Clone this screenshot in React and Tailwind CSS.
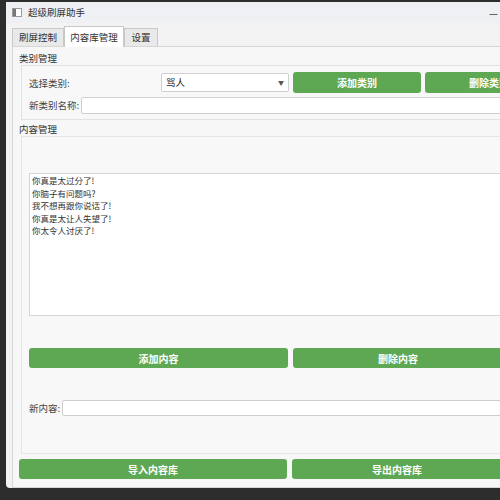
import React from "react"

const font = { fontFamily: '"Noto Sans CJK SC", "Noto Sans", sans-serif' }

function GreenButton({ children, className = "" }) {
  return (
    <button className={`h-[20px] shrink-0 rounded-[3px] bg-[#5fa853] text-white text-[10px] font-semibold flex items-center justify-center whitespace-nowrap ${className}`}>
      {children}
    </button>
  )
}

const lines = ["你真是太过分了!", "你脑子有问题吗?", "我不想再跟你说话了!", "你真是太让人失望了!", "你太令人讨厌了!"]

export default function App() {
  return (
    <div className="w-[500px] h-[500px] bg-[#2d2d2d] pt-[2px] pl-[6px] overflow-hidden" style={font}>
      <div className="w-[510px] h-[486px] bg-[#f3f3f3] flex flex-col rounded-tl-[3px] rounded-bl-[4px]">
        {/* Title bar */}
        <div className="h-[21px] bg-[#eef0f3] flex items-center pl-[6px] shrink-0">
          <div className="w-[10px] h-[9px] border border-[#9a9a9a] bg-white flex">
            <div className="w-[3px] bg-[#777]"></div>
          </div>
          <span className="ml-[6px] text-[9.5px] text-[#333] whitespace-nowrap">超级刷屏助手</span>
          <span className="ml-auto mr-[18px] text-[10px] text-[#444]">—</span>
        </div>

        {/* Tabs */}
        <div className="flex items-end pl-[6px] h-[23px] shrink-0 whitespace-nowrap">
          <div className="h-[18px] w-[52px] border border-[#c8c8c8] border-b-0 bg-[#e9e9e9] text-[9.5px] text-[#333] flex items-center justify-center">刷屏控制</div>
          <div className="h-[21px] w-[60px] border border-[#c8c8c8] border-b-0 bg-white text-[9.5px] text-[#333] flex items-center justify-center -mb-[1px] relative z-10">内容库管理</div>
          <div className="h-[18px] w-[34px] border border-[#c8c8c8] border-b-0 bg-[#e9e9e9] text-[9.5px] text-[#333] flex items-center justify-center">设置</div>
        </div>

        {/* Pane */}
        <div className="flex-1 ml-[6px] border border-[#d6d6d6] bg-[#f7f7f7] flex flex-col pl-[6px] pb-[6px] whitespace-nowrap">
          <div className="text-[9.5px] text-[#333] mt-[5px] leading-[12px]">类别管理</div>
          <div className="ml-[2px] mt-[1px] h-[55px] border border-[#e2e2e2] bg-[#f8f8f8] flex flex-col pl-[7px] pt-[6px] gap-[3px]">
            <div className="flex items-center h-[21px]">
              <span className="w-[132px] shrink-0 text-[9.5px] leading-[12px] text-[#444]">选择类别:</span>
              <div className="w-[128px] shrink-0 h-[19px] border border-[#cfcfcf] bg-white rounded-[2px] flex items-center px-[4px] text-[9.5px] text-[#222]">
                骂人
                <span className="ml-auto text-[6px] text-[#555]">▼</span>
              </div>
              <GreenButton className="ml-[4px] w-[128px] h-[21px]">添加类别</GreenButton>
              <GreenButton className="ml-[4px] w-[128px] h-[21px]">删除类别</GreenButton>
            </div>
            <div className="flex items-center h-[18px]">
              <span className="text-[9.5px] leading-[12px] text-[#444] mr-[2px] shrink-0">新类别名称:</span>
              <div className="flex-1 h-[17px] border border-[#cfcfcf] bg-white rounded-[2px]"></div>
            </div>
          </div>

          <div className="text-[9.5px] text-[#333] mt-[3px] leading-[12px]">内容管理</div>
          <div className="ml-[2px] mt-[1px] h-[318px] border border-[#e6e6e6] bg-[#f8f8f8] flex flex-col pl-[7px] pt-[36px]">
            <div className="h-[143px] shrink-0 border border-[#d6d6d6] bg-white px-[2px] pt-[0px]">
              {lines.map((l) => (
                <div key={l} className="text-[8.5px] leading-[12.5px] text-[#333]">{l}</div>
              ))}
            </div>
            <div className="flex mt-[32px] gap-[5px]">
              <GreenButton className="w-[259px]">添加内容</GreenButton>
              <GreenButton className="w-[210px]">删除内容</GreenButton>
            </div>
            <div className="flex items-center mt-[32px]">
              <span className="text-[9.5px] leading-[12px] text-[#444] mr-[2px] shrink-0">新内容:</span>
              <div className="flex-1 h-[16px] border border-[#cfcfcf] bg-white rounded-[2px]"></div>
            </div>
          </div>

          <div className="flex mt-[5px] gap-[5px]">
            <GreenButton className="w-[268px]">导入内容库</GreenButton>
            <GreenButton className="w-[210px]">导出内容库</GreenButton>
          </div>
        </div>
      </div>
    </div>
  )
}
